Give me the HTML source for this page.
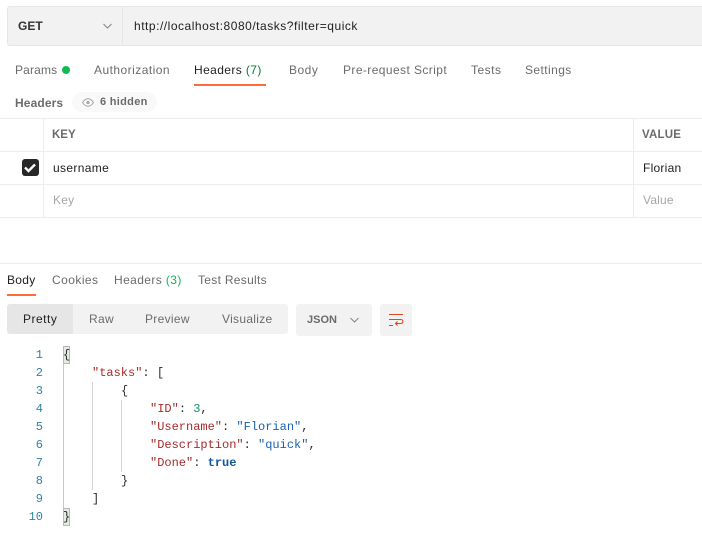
<!DOCTYPE html>
<html><head><meta charset="utf-8"><style>
*{box-sizing:border-box}
html,body{margin:0;padding:0;width:702px;height:535px;overflow:hidden;background:#fff}
body{position:relative;font-family:"Liberation Sans",sans-serif;font-size:12px;color:#6b6b6b;filter:blur(.25px)}
.a{position:absolute;white-space:nowrap;line-height:16px}
.r{position:absolute}
.m{position:absolute;font-family:"Liberation Mono",monospace;font-size:12px;line-height:18px;white-space:pre;color:#2b2b2b}
.k{color:#a82a2a}.s{color:#1a62b5}.n{color:#1a8a66}.b{color:#0f559f;font-weight:bold}
.ln{position:absolute;font-family:"Liberation Mono",monospace;font-size:12px;line-height:18px;color:#2f84a3;text-align:right;width:43px;left:0}
</style></head><body>
<div class="r" style="left:7px;top:6px;width:695px;height:40px;background:#f2f2f2;border:1px solid #e6e6e6;border-right:0;border-radius:3px 0 0 3px"></div>
<div class="r" style="left:122px;top:7px;width:1px;height:38px;background:#e6e6e6"></div>
<div class="a" style="left:18px;top:18px;font-weight:bold;color:#333;letter-spacing:0">GET</div>
<svg class="r" style="left:102px;top:23px" width="11" height="6" viewBox="0 0 11 6"><path d="M1.500 1 5.500 5 9.500 1" fill="none" stroke="#858585"/></svg>
<div class="a" style="left:134px;top:18px;color:#212121;letter-spacing:.52px">http://localhost:8080/tasks?filter=quick</div>

<div class="a" style="left:15px;top:62px;letter-spacing:.15px">Params</div>
<div class="r" style="left:62px;top:66px;width:8px;height:8px;border-radius:50%;background:#0cbb52"></div>
<div class="a" style="left:94px;top:62px;letter-spacing:.46px">Authorization</div>
<div class="a" style="left:194px;top:62px;color:#212121;letter-spacing:.4px">Headers <span style="color:#007f31">(7)</span></div>
<div class="r" style="left:194px;top:84px;width:72px;height:2px;background:#ff6c37"></div>
<div class="a" style="left:289px;top:62px;letter-spacing:.5px">Body</div>
<div class="a" style="left:343px;top:62px;letter-spacing:.41px">Pre-request Script</div>
<div class="a" style="left:471px;top:62px;letter-spacing:.5px">Tests</div>
<div class="a" style="left:525px;top:62px;letter-spacing:.42px">Settings</div>

<div class="a" style="left:15px;top:95px;font-weight:bold;color:#6b6b6b;letter-spacing:.12px">Headers</div>
<div class="r" style="left:72px;top:92px;width:85px;height:20px;border-radius:10px;background:#f9f9f9"></div>
<svg class="r" style="left:82px;top:98px" width="12" height="9" viewBox="0 0 12 9"><path d="M.5 4.500C2.500 1.500 4 .8 6 .8s3.500.7 5.500 3.700C9.500 7.500 8 8.200 6 8.200S2.500 7.500.5 4.500Z" fill="none" stroke="#a6a6a6"/><circle cx="6" cy="4.500" r="1.600" fill="#a6a6a6"/></svg>
<div class="a" style="left:100px;top:94px;font-size:11px;font-weight:bold;color:#6b6b6b;letter-spacing:.3px">6 hidden</div>

<div class="r" style="left:0;top:118px;width:702px;height:1px;background:#ededed"></div>
<div class="r" style="left:0;top:151px;width:702px;height:1px;background:#ededed"></div>
<div class="r" style="left:0;top:184px;width:702px;height:1px;background:#ededed"></div>
<div class="r" style="left:0;top:217px;width:702px;height:1px;background:#ededed"></div>
<div class="r" style="left:43px;top:118px;width:1px;height:100px;background:#ededed"></div>
<div class="r" style="left:633px;top:118px;width:1px;height:100px;background:#ededed"></div>
<div class="a" style="left:52px;top:127px;font-weight:bold;color:#6b6b6b;font-size:11.500px;letter-spacing:0">KEY</div>
<div class="a" style="left:642px;top:127px;font-weight:bold;color:#6b6b6b;font-size:11.500px;letter-spacing:.2px">VALUE</div>
<div class="r" style="left:21.500px;top:159px;width:17px;height:17px;border-radius:3px;background:#282828"></div>
<svg class="r" style="left:22px;top:159px" width="16" height="17" viewBox="0 0 16 17"><path d="M3 8.500 6.500 12 13 5.500" fill="none" stroke="#fff" stroke-width="2.400"/></svg>
<div class="a" style="left:53px;top:160px;color:#212121;letter-spacing:.35px">username</div>
<div class="a" style="left:643px;top:160px;color:#212121;letter-spacing:.25px">Florian</div>
<div class="a" style="left:53px;top:192px;color:#a6a6a6;letter-spacing:.2px">Key</div>
<div class="a" style="left:643px;top:192px;color:#a6a6a6;letter-spacing:.2px">Value</div>

<div class="r" style="left:0;top:263px;width:702px;height:1px;background:#ededed"></div>
<div class="a" style="left:7px;top:272px;color:#212121;letter-spacing:.3px">Body</div>
<div class="r" style="left:7px;top:294px;width:29px;height:2px;background:#ff6c37"></div>
<div class="a" style="left:52px;top:272px;letter-spacing:.45px">Cookies</div>
<div class="a" style="left:114px;top:272px;letter-spacing:.4px">Headers <span style="color:#0cbb52">(3)</span></div>
<div class="a" style="left:198px;top:272px;letter-spacing:.3px">Test Results</div>

<div class="r" style="left:7px;top:304px;width:281px;height:30px;border-radius:3px;background:#f2f2f2"></div>
<div class="r" style="left:7px;top:304px;width:66px;height:30px;border-radius:3px 0 0 3px;background:#e6e6e6"></div>
<div class="a" style="left:23px;top:311px;color:#212121;letter-spacing:.5px">Pretty</div>
<div class="a" style="left:89px;top:311px;letter-spacing:.3px">Raw</div>
<div class="a" style="left:145px;top:311px;letter-spacing:.3px">Preview</div>
<div class="a" style="left:222px;top:311px;letter-spacing:.3px">Visualize</div>
<div class="r" style="left:296px;top:304px;width:76px;height:32px;border-radius:3px;background:#f2f2f2"></div>
<div class="a" style="left:307px;top:312px;font-size:11px;font-weight:bold;color:#6b6b6b;letter-spacing:0">JSON</div>
<svg class="r" style="left:349px;top:317px" width="11" height="6" viewBox="0 0 11 6"><path d="M1.500 1 5.500 5 9.500 1" fill="none" stroke="#858585"/></svg>
<div class="r" style="left:380px;top:304px;width:32px;height:32px;border-radius:3px;background:#f2f2f2"></div>
<svg class="r" style="left:388px;top:313px" width="16" height="15" viewBox="0 0 16 15"><path d="M1 1.500H15M1 6.500H13C15.500 6.500 15.500 10.500 13 10.500H7.500M9.500 8.500 7.500 10.500 9.500 12.500M1 12.500H5" fill="none" stroke="#dd4a20" stroke-width="1.100"/></svg>

<div class="r" style="left:63px;top:346px;width:1px;height:180px;background:#c8c8c8"></div>
<div class="r" style="left:92px;top:382px;width:1px;height:108px;background:#d3d3d3"></div>
<div class="r" style="left:121px;top:400px;width:1px;height:72px;background:#d3d3d3"></div>
<div class="r" style="left:63px;top:346px;width:7px;height:18px;background:#e4ebe0;border:1px solid #b9b9b9"></div>
<div class="r" style="left:63px;top:508px;width:7px;height:18px;background:#e4ebe0;border:1px solid #b9b9b9"></div>

<div class="ln" style="top:346px">1</div>
<div class="ln" style="top:364px">2</div>
<div class="ln" style="top:382px">3</div>
<div class="ln" style="top:400px">4</div>
<div class="ln" style="top:418px">5</div>
<div class="ln" style="top:436px">6</div>
<div class="ln" style="top:454px">7</div>
<div class="ln" style="top:472px">8</div>
<div class="ln" style="top:490px">9</div>
<div class="ln" style="top:508px">10</div>

<div class="m" style="left:63px;top:346px">{</div>
<div class="m" style="left:92px;top:364px"><span class="k">"tasks"</span>: [</div>
<div class="m" style="left:121px;top:382px">{</div>
<div class="m" style="left:150px;top:400px"><span class="k">"ID"</span>: <span class="n">3</span>,</div>
<div class="m" style="left:150px;top:418px"><span class="k">"Username"</span>: <span class="s">"Florian"</span>,</div>
<div class="m" style="left:150px;top:436px"><span class="k">"Description"</span>: <span class="s">"quick"</span>,</div>
<div class="m" style="left:150px;top:454px"><span class="k">"Done"</span>: <span class="b">true</span></div>
<div class="m" style="left:121px;top:472px">}</div>
<div class="m" style="left:92px;top:490px">]</div>
<div class="m" style="left:63px;top:508px">}</div>
</body></html>
